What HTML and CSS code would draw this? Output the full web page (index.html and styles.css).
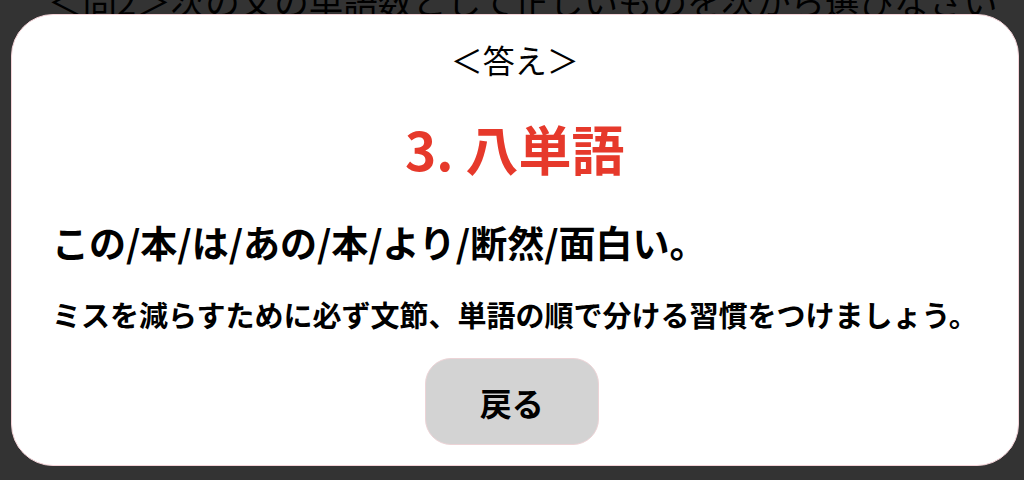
FILE: index.html
```html
<!DOCTYPE html>
<html lang="ja">
<head>
<meta charset="utf-8">
<title>答え</title>
<link rel="stylesheet" href="styles.css">
</head>
<body>
<main class="page">
  <h1 class="question">＜問2＞次の文の単語数として正しいものを次から選びなさい</h1>
</main>
<div class="overlay">
  <section class="modal">
    <p class="modal-label">＜答え＞</p>
    <p class="modal-answer">3. 八単語</p>
    <p class="modal-sentence">この/本/は/あの/本/より/断然/面白い。</p>
    <p class="modal-hint">ミスを減らすために必ず文節、単語の順で分ける習慣をつけましょう。</p>
    <button class="modal-back" type="button">戻る</button>
  </section>
</div>
</body>
</html>
```

FILE: styles.css
```css
html, body {
  margin: 0;
  padding: 0;
}

body {
  background: #333333;
  font-family: "Noto Sans CJK JP", "Noto Sans", sans-serif;
  width: 1024px;
  height: 480px;
  overflow: hidden;
}

.page {
  padding: 0 0 0 48px;
}

.question {
  margin: -20px 0 0 0;
  font-size: 34.5px;
  font-weight: 400;
  line-height: 40px;
  color: #000000;
  white-space: nowrap;
}

.overlay {
  position: fixed;
  inset: 14px 11px;
  display: flex;
}

.modal {
  flex: 1;
  box-sizing: border-box;
  background: #ffffff;
  border: 1px solid #f4d3d8;
  border-radius: 42px;
  padding: 20px 40px 0;
  display: flex;
  flex-direction: column;
  color: #000;
}

.modal p {
  margin: 0;
}

.modal-label {
  text-align: center;
  font-size: 32px;
  line-height: 48px;
  font-weight: 400;
}

.modal-answer {
  margin-top: 34px !important;
  text-align: center;
  font-size: 53px;
  line-height: 62px;
  font-weight: 700;
  color: #e6392b;
}

.modal-sentence {
  margin-top: 38px !important;
  font-size: 37px;
  line-height: 50px;
  font-weight: 700;
}

.modal-hint {
  margin-top: 27px !important;
  font-size: 29px;
  line-height: 40px;
  font-weight: 700;
  white-space: nowrap;
}

.modal-back {
  align-self: center;
  margin-top: 24px;
  width: 174px;
  height: 87px;
  flex-shrink: 0;
  border: 1px solid #ecd3d6;
  border-radius: 26px;
  background: #d3d3d3;
  font-family: inherit;
  font-size: 32px;
  font-weight: 700;
  color: #000;
  padding: 0;
  position: relative;
  left: -3px;
}
```
